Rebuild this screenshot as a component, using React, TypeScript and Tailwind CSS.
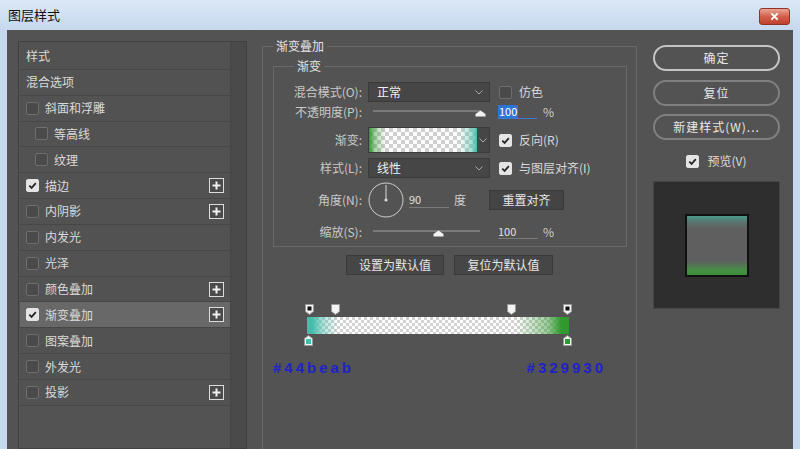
import clsx from 'clsx'

interface Row {
  label: string
  box?: boolean
  on?: boolean
  sub?: boolean
  plus?: boolean
  active?: boolean
}

const rows: Row[] = [
  { label: '样式' },
  { label: '混合选项' },
  { label: '斜面和浮雕', box: true },
  { label: '等高线', box: true, sub: true },
  { label: '纹理', box: true, sub: true },
  { label: '描边', box: true, on: true, plus: true },
  { label: '内阴影', box: true, plus: true },
  { label: '内发光', box: true },
  { label: '光泽', box: true },
  { label: '颜色叠加', box: true, plus: true },
  { label: '渐变叠加', box: true, on: true, plus: true, active: true },
  { label: '图案叠加', box: true },
  { label: '外发光', box: true },
  { label: '投影', box: true, plus: true },
]

function Check({ on }: { on?: boolean }) {
  return (
    <span
      className={clsx(
        'flex h-[13px] w-[13px] shrink-0 items-center justify-center rounded-[2px] border',
        on ? 'border-[#e4e4e4] bg-[#e4e4e4]' : 'border-[#6e6e6e] bg-[#4a4a4a]'
      )}
    >
      {on && (
        <svg viewBox="0 0 10 10" className="h-[9px] w-[9px]">
          <path d="M1.4 5.1 4 7.6 8.7 2.3" fill="none" stroke="#262626" strokeWidth="2" />
        </svg>
      )}
    </span>
  )
}

function Plus() {
  return (
    <span className="flex h-[15px] w-[15px] items-center justify-center border border-[#dcdcdc] bg-[#4b4b4b]">
      <svg viewBox="0 0 11 11" className="h-[11px] w-[11px]">
        <path d="M5.5 1.5v8M1.5 5.5h8" stroke="#f0f0f0" strokeWidth="2" />
      </svg>
    </span>
  )
}

function Chevron() {
  return (
    <svg viewBox="0 0 8 5" className="h-[5px] w-[8px]">
      <path d="M0.5 0.5 4 4 7.5 0.5" fill="none" stroke="#a8a8a8" strokeWidth="1" />
    </svg>
  )
}

function Select({ value }: { value: string }) {
  return (
    <div className="flex h-[20px] w-[122px] items-center justify-between border border-[#3b3b3b] bg-[#464646] pl-[8px] pr-[6px] text-[12px] text-[#efefef]">
      <span>{value}</span>
      <Chevron />
    </div>
  )
}

function Thumb() {
  return (
    <svg viewBox="0 0 11 7" className="h-[7px] w-[11px]">
      <path d="M0.5 6.5V4L5.5 0.5 10.5 4v2.5Z" fill="#f2f2f2" />
    </svg>
  )
}

function Slider({ at }: { at: number }) {
  return (
    <div className="relative ml-[5px] h-[20px] w-[107px]">
      <div className="mt-[8px] h-[2px] w-full bg-[#7a7a7a]" />
      <div className="absolute top-[8px]" style={{ left: at - 5 }}>
        <Thumb />
      </div>
    </div>
  )
}

function Label({ children }: { children: string }) {
  return <span className="w-[94px] shrink-0 pr-[6px] text-right text-[12px] text-[#c9c9c9]">{children}</span>
}

function TopStop({ dark }: { dark?: boolean }) {
  return (
    <svg viewBox="0 0 9 11" className="h-[11px] w-[9px]">
      <path d="M0.5 0.5h8v7L4.5 10.5 0.5 7.5Z" fill="#f4f4f4" stroke="#9a9a9a" strokeWidth="1" />
      {dark && <rect x="2.5" y="2.5" width="4" height="4" fill="#111" />}
    </svg>
  )
}

function BottomStop({ color }: { color: string }) {
  return (
    <svg viewBox="0 0 9 11" className="h-[11px] w-[9px]">
      <path d="M4.5 0.5 8.5 3.5v7h-8v-7Z" fill="#f4f4f4" stroke="#9a9a9a" strokeWidth="1" />
      <rect x="2" y="4" width="5" height="5" fill={color} />
    </svg>
  )
}

function PillButton({ children, strong }: { children: string; strong?: boolean }) {
  return (
    <div
      className={clsx(
        'flex h-[26px] items-center justify-center rounded-full border-2 text-[12px] tracking-[1px] text-[#e8e8e8]',
        strong ? 'border-[#c4c4c4]' : 'border-[#808080]'
      )}
    >
      {children}
    </div>
  )
}

export default function App() {
  return (
    <div className="flex h-[449px] w-[800px] flex-col overflow-hidden bg-[#c5d8ee] font-['Noto_Sans_CJK_SC','Microsoft_YaHei',sans-serif]">
      {/* title bar */}
      <div className="flex h-[30px] shrink-0 items-center justify-between bg-gradient-to-b from-[#dce8f6] to-[#c6d8ee] pl-[8px] pr-[10px]">
        <span className="text-[13px] text-[#111]">图层样式</span>
        <div className="mt-[3px] flex h-[17px] w-[31px] items-center justify-center rounded-[3px] border border-[#8d3426] bg-gradient-to-b from-[#e9a597] via-[#d3604c] to-[#c0402c]">
          <svg viewBox="0 0 10 10" className="h-[9px] w-[9px]">
            <path d="M1.5 1.5 8.5 8.5M8.5 1.5 1.5 8.5" stroke="#fff" strokeWidth="2.2" />
          </svg>
        </div>
      </div>

      <div className="flex flex-1 px-[7px]">
        <div className="flex flex-1 bg-[#535353] pl-[11px]">
          {/* left list */}
          <div className="mt-[11px] flex w-[229px] border border-[#414141]">
            <div className="ml-[1px] w-[210px] pt-[2px]">
              {rows.map((r) => (
                <div
                  key={r.label}
                  className={clsx(
                    'flex h-[25.85px] items-center border-b border-[#474747] pr-[4px] text-[12px] text-[#dadada]',
                    r.active ? 'bg-[#686868]' : 'bg-[#525252]',
                    r.sub ? 'pl-[15px]' : 'pl-[6px]'
                  )}
                >
                  {r.box && <Check on={r.on} />}
                  <span className={clsx(r.box && 'ml-[6px]')}>{r.label}</span>
                  {r.plus && (
                    <span className="ml-auto mr-[2px]">
                      <Plus />
                    </span>
                  )}
                </div>
              ))}
            </div>
            <div className="flex-1 border-l border-[#464646] bg-[#4a4a4a]" />
          </div>

          {/* middle group */}
          <div className="relative ml-[15px] mt-[16px] flex w-[375px] flex-col border-x border-t border-[#696969] pt-[19px]">
            <span className="absolute -top-[10px] left-[10px] bg-[#535353] px-[3px] text-[12px] text-[#e2e2e2]">渐变叠加</span>

            <div className="relative ml-[10px] mr-[9px] flex flex-col border border-[#696969] pb-[4px] pt-[15px]">
              <span className="absolute -top-[10px] left-[20px] bg-[#535353] px-[3px] text-[12px] text-[#e2e2e2]">渐变</span>

              <div className="flex h-[20px] items-center">
                <Label>混合模式(O):</Label>
                <Select value="正常" />
                <span className="ml-[9px]">
                  <Check />
                </span>
                <span className="ml-[7px] text-[12px] text-[#d8d8d8]">仿色</span>
              </div>

              <div className="flex h-[20px] items-center">
                <Label>不透明度(P):</Label>
                <Slider at={107} />
                <div className="ml-[18px] flex h-[14px] w-[39px] items-start border-b border-[#3d7bd0]">
                  <span className="bg-[#2f73d6] px-[1px] text-[11px] leading-[13px] text-white">100</span>
                </div>
                <span className="ml-[6px] text-[12px] text-[#d0d0d0]">%</span>
              </div>

              <div className="mt-[5px] flex h-[26px] items-center">
                <Label>渐变:</Label>
                <div className="flex h-[26px] w-[122px] border border-[#3b3b3b]">
                  <div className="h-full w-[108px] bg-[linear-gradient(to_right,#329930,rgba(50,153,48,0.4)_6%,transparent_16%,transparent_84%,rgba(68,190,171,0.5)_95%,#44beab),repeating-conic-gradient(#cfcfcf_0_25%,#ffffff_0_50%)] bg-[length:100%_100%,8px_8px]" />
                  <div className="flex flex-1 items-center justify-center bg-[#464646]">
                    <Chevron />
                  </div>
                </div>
                <span className="ml-[9px]">
                  <Check on />
                </span>
                <span className="ml-[7px] text-[12px] text-[#d8d8d8]">反向(R)</span>
              </div>

              <div className="mt-[5px] flex h-[20px] items-center">
                <Label>样式(L):</Label>
                <Select value="线性" />
                <span className="ml-[9px]">
                  <Check on />
                </span>
                <span className="ml-[7px] text-[12px] text-[#d8d8d8]">与图层对齐(I)</span>
              </div>

              <div className="flex h-[44px] items-center">
                <Label>角度(N):</Label>
                <svg viewBox="0 0 36 36" className="h-[36px] w-[36px]">
                  <circle cx="18" cy="18" r="17" fill="none" stroke="#cfcfcf" strokeWidth="1" />
                  <path d="M18 18V3" stroke="#d8d8d8" strokeWidth="1" />
                  <circle cx="18" cy="18" r="1.6" fill="#d8d8d8" />
                </svg>
                <div className="ml-[5px] flex h-[16px] w-[40px] items-center border-b border-[#7a7a7a] text-[11px] text-[#e0e0e0]">
                  90
                </div>
                <span className="ml-[5px] text-[12px] text-[#d0d0d0]">度</span>
                <div className="ml-[23px] flex h-[20px] w-[75px] items-center justify-center border border-[#3a3a3a] bg-[#444444] text-[12px] text-[#e6e6e6]">
                  重置对齐
                </div>
              </div>

              <div className="flex h-[20px] items-center">
                <Label>缩放(S):</Label>
                <Slider at={65} />
                <div className="ml-[18px] flex h-[14px] w-[40px] items-center border-b border-[#7a7a7a] text-[11px] text-[#e0e0e0]">
                  100
                </div>
                <span className="ml-[5px] text-[12px] text-[#d0d0d0]">%</span>
              </div>
            </div>

            <div className="mt-[8px] flex justify-center gap-[10px]">
              <div className="flex h-[20px] w-[98px] items-center justify-center border border-[#3a3a3a] bg-[#464646] text-[12px] text-[#e6e6e6]">
                设置为默认值
              </div>
              <div className="flex h-[20px] w-[99px] items-center justify-center border border-[#3a3a3a] bg-[#464646] text-[12px] text-[#e6e6e6]">
                复位为默认值
              </div>
            </div>

            {/* gradient editor bar */}
            <div className="relative ml-[44px] mt-[29px] h-[42px] w-[262px]">
              <div className="absolute left-[-2px] top-0">
                <TopStop dark />
              </div>
              <div className="absolute left-[24px] top-0">
                <TopStop />
              </div>
              <div className="absolute left-[200px] top-0">
                <TopStop />
              </div>
              <div className="absolute left-[256px] top-0">
                <TopStop dark />
              </div>
              <div className="absolute left-0 top-[13px] h-[17px] w-[262px] bg-[linear-gradient(to_right,#44beab,#44beab_2%,rgba(68,190,171,0.45)_6%,transparent_12%,transparent_80%,rgba(50,153,48,0.5)_92%,#329930_97%,#329930),repeating-conic-gradient(#d2d2d2_0_25%,#ffffff_0_50%)] bg-[length:100%_100%,6px_6px]" />
              <div className="absolute left-[-3px] top-[31px]">
                <BottomStop color="#44beab" />
              </div>
              <div className="absolute left-[256px] top-[31px]">
                <BottomStop color="#329930" />
              </div>
            </div>

            <div className="ml-[10px] mt-[11px] flex w-[333px] justify-between font-['Liberation_Sans',sans-serif] text-[15px] font-bold tracking-[3px] text-[#1e22c8]">
              <span>#44beab</span>
              <span>#329930</span>
            </div>
          </div>

          {/* right column */}
          <div className="ml-[16px] mt-[15px] flex w-[127px] flex-col">
            <PillButton strong>确定</PillButton>
            <div className="mt-[9px]">
              <PillButton>复位</PillButton>
            </div>
            <div className="mt-[8px]">
              <PillButton>新建样式(W)...</PillButton>
            </div>
            <div className="mt-[12px] flex items-center justify-center gap-[8px]">
              <Check on />
              <span className="text-[12px] text-[#dcdcdc]">预览(V)</span>
            </div>
            <div className="mt-[11px] flex h-[128px] flex-col border border-[#464646] bg-[#2e2e2e] pl-[31px] pt-[32px]">
              <div className="h-[63px] w-[64px] border-2 border-[#111] bg-[linear-gradient(to_bottom,#4a9a88,#5a7570_10%,#5f5f5f_22%,#5f5f5f_76%,#468f45_92%,#3a8c38)]" />
            </div>
          </div>
        </div>
      </div>
    </div>
  )
}
